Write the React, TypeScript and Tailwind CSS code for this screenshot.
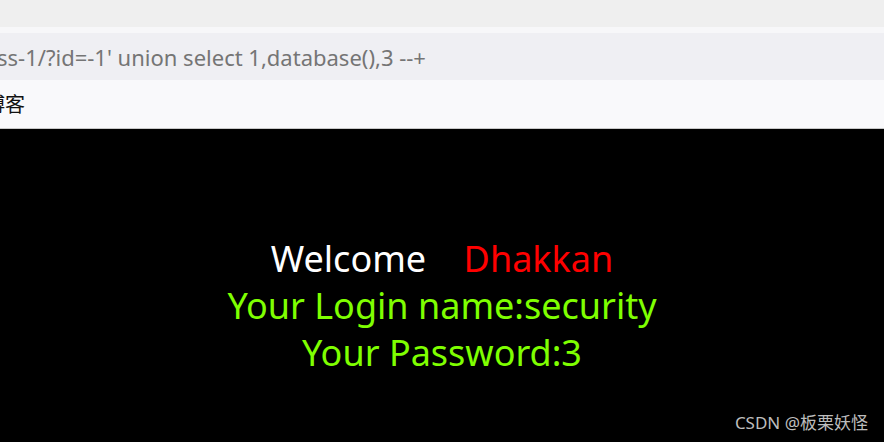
import React from 'react';

const App = () => {
  return (
    <div className="w-[884px] h-[442px] overflow-hidden flex flex-col bg-black" style={{ fontFamily: '"Noto Sans", "Noto Sans CJK SC", sans-serif' }}>
      {/* browser chrome */}
      <div className="h-[27px] bg-[#efefef] shrink-0" />
      <div className="h-[6px] bg-[#f7f7f9] shrink-0" />
      <div className="h-[47px] bg-[#efeff3] shrink-0 flex items-center overflow-hidden">
        <span className="-ml-[3px] mt-[1px] whitespace-nowrap text-[22px] text-[#757575]">ss-1/?id=-1' union select 1,database(),3 --+</span>
      </div>
      <div className="h-[49px] bg-[#f9f9fb] shrink-0 flex items-center overflow-hidden border-b border-[#c8c8c8]">
        <span className="-ml-[15px] whitespace-nowrap text-[20px] text-[#111]" style={{ fontFamily: '"Noto Sans CJK SC", sans-serif' }}>博客</span>
      </div>

      {/* page */}
      <div className="flex-1 bg-black flex flex-col relative">
        <div className="pt-[106px] flex flex-col items-center text-[36px] leading-[47px]">
          <div className="whitespace-pre">
            <span className="text-white">Welcome</span>
            <span className="text-white">{'    '}</span>
            <span className="text-[#ff0000]">Dhakkan</span>
          </div>
          <div className="text-[#7fff00]">Your Login name:security</div>
          <div className="text-[#7fff00]">Your Password:3</div>
        </div>
        <div className="absolute right-[16px] bottom-[7px] text-[17px] text-[#bdbdbd]" style={{ fontFamily: '"Noto Sans", "Noto Sans CJK SC", sans-serif' }}>
          CSDN @板栗妖怪
        </div>
      </div>
    </div>
  );
};

export default App;
